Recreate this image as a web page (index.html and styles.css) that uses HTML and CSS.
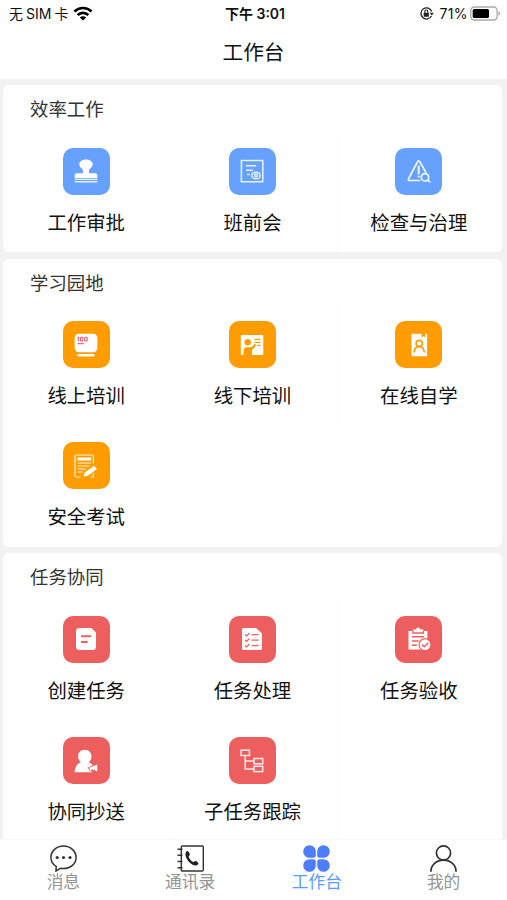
FILE: index.html
```html
<!DOCTYPE html>
<html lang="zh-CN">
<head>
  <meta charset="UTF-8">
  <meta name="viewport" content="width=device-width, initial-scale=1.0">
  <title>工作台</title>
  <link rel="stylesheet" href="styles.css">
</head>
<body>
  <div class="app">
    <div class="status-bar">
      <div class="status-left">
        <span class="carrier">无<span class="sim">SIM</span>卡</span>
        <svg class="wifi" viewBox="0 0 18 14" fill="none" stroke="#000" stroke-width="2.5">
          <path d="M1 5.1a11.5 11.5 0 0 1 16 0"/>
          <path d="M4 8.4a7.2 7.2 0 0 1 10 0"/>
          <path d="M9 13.6L6 10.7a4.3 4.3 0 0 1 6 0z" fill="#000" stroke="none"/>
        </svg>
      </div>
      <div class="time">下午 3:01</div>
      <div class="status-right">
        <svg class="lock" viewBox="0 0 14 14" fill="none" stroke="#222" stroke-width="1.2">
          <path d="M11.6 9.4A5.2 5.2 0 1 1 11.9 5.2"/>
          <path d="M10 6.2h3.8l-1.8 2.6z" fill="#222" stroke="none"/>
          <rect x="4.4" y="6.3" width="4.8" height="3.7" rx=".5" fill="#222" stroke="none"/>
          <path d="M5.4 6.5V5.2a1.4 1.4 0 0 1 2.8 0v1.3" stroke-width="1"/>
        </svg>
        <span>71%</span>
        <svg class="battery" viewBox="0 0 30 14">
          <rect x=".7" y=".7" width="25.6" height="12.6" rx="3.6" fill="#fff" stroke="#aaa" stroke-width="1.3"/>
          <rect x="2.6" y="2.6" width="15.8" height="8.8" rx="1.6" fill="#000"/>
          <path d="M27.6 4.8v4.4q1.7-.8 1.7-2.2t-1.7-2.2z" fill="#aaa"/>
        </svg>
      </div>
    </div>
    <h1 class="page-title">工作台</h1>

    <main class="content">
      <section class="card">
        <h2>效率工作</h2>
        <div class="grid">
          <a class="item">
            <span class="icon blue">
              <svg viewBox="0 0 24 24" fill="#fff">
                <path d="M12 .6c4 0 6.700 2.200 6.700 5 0 3-3.700 3.900-3.700 6.400v2.200h6.300q2 0 2 2v3H.7v-3q0-2 2-2H9V12c0-2.500-3.700-3.400-3.700-6.400 0-2.800 2.700-5 6.700-5z"/>
                <path d="M.7 20.100h22.600v.9H.7zM.7 22h22.600v1.600H.7z" opacity=".85"/>
              </svg>
            </span>
            <span class="label">工作审批</span>
          </a>
          <a class="item">
            <span class="icon blue">
              <svg viewBox="0 0 24 24" fill="none" stroke="#e8f1ff" stroke-width="1.5">
                <path d="M1.4 1.4h21.400v21.400H1.400z"/>
                <path d="M6 6.700h10M6 11.200h7M7 15.600h2.600"/>
                <ellipse cx="16" cy="16.500" rx="4.200" ry="3.300"/>
                <circle cx="16" cy="16.500" r="1.300"/>
              </svg>
            </span>
            <span class="label">班前会</span>
          </a>
          <a class="item">
            <span class="icon blue">
              <svg viewBox="0 0 24 24" fill="none" stroke="#f2f7ff" stroke-width="1.7" stroke-linecap="round" stroke-linejoin="round">
                <path d="M12.500 21.500H2.600q-2 0-1-1.900L10.400 3q1.300-2.200 2.600 0l5.800 10.300"/>
                <path d="M11.700 7.300v7.200M11.700 17.500v.3" stroke-width="2"/>
                <circle cx="18" cy="18.300" r="3.700"/>
                <path d="M20.700 21.500l2 1.300"/>
              </svg>
            </span>
            <span class="label">检查与治理</span>
          </a>
        </div>
      </section>

      <section class="card">
        <h2>学习园地</h2>
        <div class="grid">
          <a class="item">
            <span class="icon orange">
              <svg viewBox="0 0 24 24" fill="#fff">
                <rect x=".6" y=".8" width="22.800" height="18.400" rx="4.200"/>
                <rect x="3.500" y="21" width="17" height="2.500" rx="1.200"/>
                <g fill="none" stroke="#f4566a" stroke-width="1.100">
                  <path d="M3.500 4.300h.8v4"/>
                  <rect x="6.400" y="4.300" width="2.500" height="3.700" rx="1"/>
                  <rect x="10.700" y="4.300" width="2.500" height="3.700" rx="1"/>
                  <path d="M3.500 10.700h6.500"/>
                </g>
              </svg>
            </span>
            <span class="label">线上培训</span>
          </a>
          <a class="item">
            <span class="icon orange">
              <svg viewBox="0 0 24 24">
                <rect x=".8" y="2" width="22.500" height="20" rx="1.200" fill="#fff"/>
                <circle cx="7.700" cy="9.300" r="3.200" fill="#ff9d00"/>
                <path d="M3.600 22v-4.800q0-3 3.200-3h3.500q1.400 0 2.400-1.200l2-2.200 1.600 1.300-4.300 5.100V22z" fill="#ff9d00"/>
                <path d="M14.500 6.300h6M14.500 9.300h6M17 12.300h3.500" stroke="#ff9d00" stroke-width="1.300"/>
              </svg>
            </span>
            <span class="label">线下培训</span>
          </a>
          <a class="item">
            <span class="icon orange">
              <svg viewBox="0 0 24 24">
                <path d="M4.500.8h10v3.600l1.800-1.400 1.800 1.400V.8h2v22.400H4.500z" fill="#fff"/>
                <g fill="none" stroke="#ff9d00" stroke-width="1.600">
                  <circle cx="12.200" cy="10.500" r="3.100"/>
                  <path d="M7 19.500c.3-3.500 2.200-5.900 5.200-5.900s4.900 2.400 5.200 5.900"/>
                </g>
              </svg>
            </span>
            <span class="label">在线自学</span>
          </a>
          <a class="item">
            <span class="icon orange">
              <svg viewBox="0 0 24 24" fill="none" stroke="#fff3d8" stroke-width="1.200">
                <path d="M6.500 23H2.200Q1 23 1 21.800V2.200Q1 1 2.200 1h16q1.200 0 1.200 1.200v7.300M19.400 19v4h-3"/>
                <path d="M3.300 3.500h13.800v3H3.300z" fill="#fff" stroke="none"/>
                <path d="M3.500 9h13.300M3.500 12h12M3.500 15h8.500M3.500 18h5.500"/>
                <path d="M9.300 22.600l1.500-4L20 11.700l3 3.200-9.300 6.800z" fill="#fff" stroke="none"/>
              </svg>
            </span>
            <span class="label">安全考试</span>
          </a>
        </div>
      </section>

      <section class="card">
        <h2>任务协同</h2>
        <div class="grid">
          <a class="item">
            <span class="icon red">
              <svg viewBox="0 0 24 24">
                <path d="M5 1h12.500L22 5.500V19.500q0 3.500-3.500 3.500H5.500Q2 23 2 19.500V4q0-3 3-3z" fill="#fff"/>
                <path d="M7 9.300h10M7 15h6.500" stroke="#ed5f5f" stroke-width="2"/>
              </svg>
            </span>
            <span class="label">创建任务</span>
          </a>
          <a class="item">
            <span class="icon red">
              <svg viewBox="0 0 24 24">
                <path d="M3.500 1H16l6 5.500v15q0 1.500-1.500 1.500h-17Q2 23 2 21.500v-19Q2 1 3.500 1z" fill="#fff"/>
                <path d="M5 7.500l1.500 1.500L9.500 6M11.500 7.700h7M5 13l1.500 1.500 3-3M11.500 13.200h7M5 18.500L6.500 20l3-3M11.500 18.700h7" fill="none" stroke="#ed5f5f" stroke-width="1.200"/>
              </svg>
            </span>
            <span class="label">任务处理</span>
          </a>
          <a class="item">
            <span class="icon red">
              <svg viewBox="0 0 24 24">
                <path d="M1.500 4h4.500V2.500h3Q9.500.6 11.200.6t2.200 1.900h3V4h4v18.500h-18.900z" fill="#fff"/>
                <path d="M6 4v2h10.400V4M4.800 9.800h12.500M4.800 14h7M4.800 18.200h5" fill="none" stroke="#ed5f5f" stroke-width="1.400"/>
                <circle cx="18" cy="17.700" r="6" fill="#fff" stroke="#ed5f5f" stroke-width="1.200"/>
                <path d="M15 17.600l2.300 2.200 4-4" fill="none" stroke="#ed5f5f" stroke-width="1.500"/>
              </svg>
            </span>
            <span class="label">任务验收</span>
          </a>
          <a class="item">
            <span class="icon red">
              <svg viewBox="0 0 24 24">
                <path d="M10.800.8c3.900 0 6.700 2.800 6.700 6.700 0 2.500-1.200 4.500-2.800 5.700 1.700.7 3.200 1.800 4.200 3.100L13.500 19l5 4.200H.7c0-4.700 2.300-8.500 6.200-10-1.600-1.200-2.800-3.200-2.800-5.700C4.100 3.600 6.900.8 10.800.8z" fill="#fff"/>
                <path d="M23.600 15.300v7.400l-5.200-1.900-2.400 1.500-.6-2.600-1.500-.9z" fill="#fff" stroke="#ed5f5f" stroke-width=".7"/>
              </svg>
            </span>
            <span class="label">协同抄送</span>
          </a>
          <a class="item">
            <span class="icon red">
              <svg viewBox="0 0 24 24" fill="none" stroke="#ffe9e9" stroke-width="1.500">
                <rect x="1" y="1.200" width="8.500" height="5.300"/>
                <rect x="14" y="9.500" width="8.700" height="5.300"/>
                <rect x="14" y="17.300" width="8.700" height="5.300"/>
                <path d="M5.200 6.500V20H14M5.200 12.100H14"/>
              </svg>
            </span>
            <span class="label">子任务跟踪</span>
          </a>
        </div>
      </section>
    </main>

    <nav class="tab-bar">
      <a class="tab">
        <svg viewBox="0 0 27 27" fill="none" stroke="#333" stroke-width="1.500">
          <path d="M6.200 21.300C2.800 19.300.9 16.100.9 12.400.9 6.100 6.500 1 13.500 1s12.600 5.100 12.600 11.400-5.600 11.100-12.600 11.100c-1 0-1.900-.1-2.800-.3L6 26z"/>
          <g fill="#333" stroke="none">
            <circle cx="7.200" cy="12.500" r="1.600"/>
            <circle cx="13.500" cy="12.500" r="1.600"/>
            <circle cx="20" cy="12.500" r="1.600"/>
          </g>
        </svg>
        <span>消息</span>
      </a>
      <a class="tab">
        <svg viewBox="0 0 27 27" fill="none" stroke="#333" stroke-width="1.400">
          <rect x="4.300" y="1" width="22" height="25" rx="1"/>
          <path d="M.5 4.200h5M.5 10.300h5M.5 16.500h5M.5 22.700h5" stroke-width="1.600"/>
          <path d="M9 7c-.8 1.300-.7 3.500.2 5.500 1.500 3.600 5 7.200 8.500 8 1.500.3 3.500-.6 3.700-2 .1-1-1.800-2.600-3-2.500-.9.100-1.400 1.200-2.200 1-1.800-.6-4.100-3.300-4.500-5.200-.1-.8 1.200-1.200 1.100-2.200C12.700 7.900 11.500 6.200 10.500 6q-1 .1-1.500 1z" fill="#222" stroke="none"/>
        </svg>
        <span>通讯录</span>
      </a>
      <a class="tab active">
        <svg viewBox="0 0 27 27" fill="#4d7dfb">
          <path d="M6.500.2a6.300 6.300 0 0 1 6.300 6.300v3.800q0 2.500-2.500 2.500H6.500a6.300 6.300 0 0 1 0-12.600z"/>
          <path d="M20.500.2a6.300 6.300 0 0 0-6.300 6.300v3.800q0 2.500 2.500 2.500h3.800a6.300 6.300 0 0 0 0-12.600z"/>
          <path d="M6.500 26.800a6.300 6.300 0 0 0 6.300-6.300v-3.800q0-2.500-2.500-2.500H6.500a6.300 6.300 0 0 0 0 12.600z"/>
          <path d="M20.500 26.800a6.300 6.300 0 0 1-6.300-6.300v-3.800q0-2.500 2.500-2.500h3.800a6.300 6.300 0 0 1 0 12.600z"/>
        </svg>
        <span>工作台</span>
      </a>
      <a class="tab">
        <svg viewBox="0 0 27 27" fill="none" stroke="#333" stroke-width="1.700">
          <circle cx="13.500" cy="8" r="7.100"/>
          <path d="M.9 26.700C.9 19.900 6.400 15.100 13.500 15.100s12.600 4.800 12.600 11.600"/>
        </svg>
        <span>我的</span>
      </a>
    </nav>
  </div>
</body>
</html>
```

FILE: styles.css
```css
* { margin: 0; padding: 0; box-sizing: border-box; }
body {
  font-family: "Liberation Sans", "Noto Sans CJK SC", sans-serif;
  background: #f2f2f2;
  color: #111;
}
.app {
  height: 900px;
  display: flex;
  flex-direction: column;
  overflow: hidden;
}
.status-bar {
  flex: none;
  height: 27px;
  padding: 0 6px 0 9px;
  background: #fff;
  display: grid;
  grid-template-columns: 1fr auto 1fr;
  align-items: center;
  font-family: Inter, "Noto Sans CJK SC", sans-serif;
  font-size: 14px;
  line-height: 27px;
}
.status-left, .status-right {
  display: flex;
  align-items: center;
}
.status-left { gap: 5px; }
.sim { margin: 0 3px; }
.wifi { width: 20px; height: 15px; }
.time { font-weight: 600; }
.status-right { justify-content: flex-end; }
.lock { width: 15px; height: 15px; margin-right: 5px; }
.status-right span { letter-spacing: 0.4px; }
.battery { width: 31px; height: 15px; margin-left: 2px; }
.page-title {
  flex: none;
  height: 52px;
  background: #fff;
  text-align: center;
  font-size: 20.7px;
  font-weight: 400;
  line-height: 52px;
}
.content {
  flex: 1;
  min-height: 0;
  overflow: hidden;
  padding: 6px 5px 0 3px;
  display: flex;
  flex-direction: column;
  gap: 6.3px;
}
.card {
  flex: none;
  background: #fff;
  border-radius: 6px;
}
.card h2 {
  height: 46px;
  padding-left: 27px;
  font-size: 18.4px;
  font-weight: 400;
  line-height: 49px;
  color: #333;
}
.grid {
  display: grid;
  grid-template-columns: repeat(3, 1fr);
  grid-auto-rows: 121.3px;
}
.item {
  display: flex;
  flex-direction: column;
  align-items: center;
  padding-top: 16.5px;
  box-shadow: 1px 0 #fcfcfc;
}
.item:nth-child(3n) { box-shadow: none; }
.icon {
  width: 47px;
  height: 47px;
  border-radius: 10px;
  display: flex;
  align-items: center;
  justify-content: center;
}
.icon svg { width: 24px; height: 24px; }
.blue { background: #66a1ff; }
.orange { background: #ff9d00; }
.red { background: #ed5f5f; }
.label {
  margin-top: 14px;
  font-size: 19.4px;
  line-height: 28px;
  white-space: nowrap;
}
.tab-bar {
  flex: none;
  height: 61px;
  background: #fff;
  border-top: 1px solid #f8f8f8;
  display: grid;
  grid-template-columns: repeat(4, 1fr);
}
.tab {
  display: flex;
  flex-direction: column;
  align-items: center;
  padding-top: 5px;
  font-size: 16.7px;
  line-height: 22px;
  color: #949494;
}
.tab svg { width: 27px; height: 27px; }
.tab.active { color: #5b9bff; }
```
